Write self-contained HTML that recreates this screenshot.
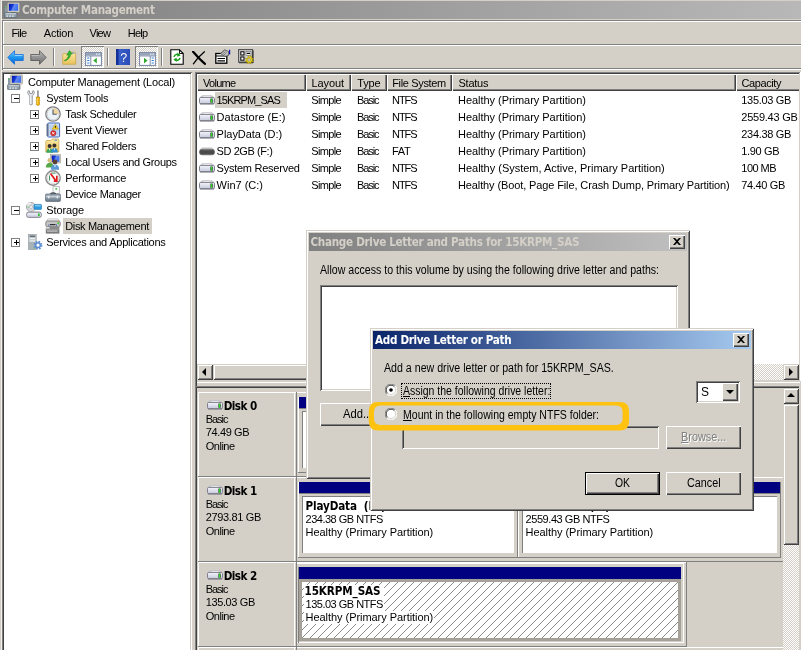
<!DOCTYPE html>
<html lang="en"><head><meta charset="utf-8"><title>Computer Management</title>
<style>
html,body{margin:0;padding:0}
body{width:801px;height:650px;overflow:hidden;background:#d4d0c8;position:relative;font-family:"Liberation Sans",sans-serif;font-size:11px;color:#000}
#r{position:absolute;left:0;top:0;width:801px;height:650px;overflow:hidden;will-change:transform}
#r div,#r span,#r svg{position:absolute;box-sizing:border-box}
.t{white-space:nowrap;line-height:13px;font-size:11px;letter-spacing:-0.2px}
.b{white-space:nowrap;line-height:13px;font-size:11.6px;font-weight:bold;font-family:"DejaVu Sans Condensed","DejaVu Sans","Liberation Sans",sans-serif;font-stretch:condensed}
.d{white-space:nowrap;line-height:13px;font-size:12px;transform-origin:0 0}
.dither{background-image:linear-gradient(45deg,#fff 25%,transparent 25%,transparent 75%,#fff 75%),linear-gradient(45deg,#fff 25%,transparent 25%,transparent 75%,#fff 75%);background-size:2px 2px;background-position:0 0,1px 1px;background-color:#d4d0c8}
u{text-decoration:underline}
</style></head>
<body><div id="r">
<svg style="left:0;top:0" width="0" height="0"><defs>
<linearGradient id="gb" x1="0" y1="0" x2="0" y2="1"><stop offset="0" stop-color="#7fd0ff"/><stop offset=".5" stop-color="#1e96f0"/><stop offset="1" stop-color="#0a5ad0"/></linearGradient>
<linearGradient id="gg" x1="0" y1="0" x2="0" y2="1"><stop offset="0" stop-color="#b8b8b8"/><stop offset="1" stop-color="#6c6c6c"/></linearGradient>
<linearGradient id="gd" x1="0" y1="0" x2="0" y2="1"><stop offset="0" stop-color="#f4f4fa"/><stop offset="1" stop-color="#c4c8dc"/></linearGradient>
<linearGradient id="gs" x1="0" y1="0" x2="1" y2=".35"><stop offset="0" stop-color="#0014a0"/><stop offset=".45" stop-color="#1838d8"/><stop offset=".6" stop-color="#6088f0"/><stop offset="1" stop-color="#4070f0"/></linearGradient>
<linearGradient id="gf" x1="0" y1="0" x2="0" y2="1"><stop offset="0" stop-color="#fbe9a6"/><stop offset="1" stop-color="#e8c25a"/></linearGradient>
<linearGradient id="gh" x1="0" y1="0" x2="1" y2="0"><stop offset="0" stop-color="#16329a"/><stop offset=".2" stop-color="#3a62cc"/><stop offset="1" stop-color="#2a4cb8"/></linearGradient>
<linearGradient id="gt" x1="0" y1="0" x2="0" y2="1"><stop offset="0" stop-color="#a8b4c0"/><stop offset="1" stop-color="#6c7c8c"/></linearGradient>
</defs></svg>
<div style="left:1px;top:0px;width:1px;height:650px;background:#f2f0ec"></div>
<div style="left:2px;top:1px;width:799px;height:18px;background:linear-gradient(90deg,#808080,#b8b8b8)"></div>
<span class="b" style="letter-spacing:-0.290px;left:22.00px;top:4px;color:#d4d0c8;">Computer Management</span>
<svg style="left:4px;top:2px" width="16" height="16" viewBox="0 0 16 16"><rect x="3.5" y=".8" width="12" height="9.4" rx=".8" fill="#d8d4c4" stroke="#9c9888" stroke-width=".6"/><rect x="4.8" y="1.8" width="9.4" height="7" fill="url(#gs)"/><rect x="7.5" y="10" width="4" height="1.6" fill="#555"/><rect x="1" y="4" width="2" height="6" fill="#8c9aa4"/><rect x="1.3" y="5" width="1" height="1" fill="#3c3"/><rect x=".6" y="10.6" width="12.4" height="5" rx=".6" fill="#8e9ca8" stroke="#5c6874" stroke-width=".7"/><rect x="1.6" y="11.3" width="10.4" height="1" fill="#d8e0e8"/><rect x="2.5" y="13.4" width="1.6" height="1.4" fill="#e8eef4"/><rect x="5.3" y="13.4" width="1.6" height="1.4" fill="#e8eef4"/><rect x="8.1" y="13.4" width="1.6" height="1.4" fill="#e8eef4"/></svg>
<div style="left:2px;top:20px;width:1px;height:50px;background:#808080"></div>
<div style="left:3px;top:21px;width:1px;height:49px;background:#fff"></div>
<div style="left:3px;top:20px;width:798px;height:1px;background:#808080"></div>
<div style="left:3px;top:21px;width:798px;height:1px;background:#fff"></div>
<span class="t" style="letter-spacing:-0.702px;left:11.50px;top:27px;">File</span>
<span class="t" style="letter-spacing:-0.191px;left:43.75px;top:27px;">Action</span>
<span class="t" style="letter-spacing:-0.733px;left:89.50px;top:27px;">View</span>
<span class="t" style="letter-spacing:-0.752px;left:127.75px;top:27px;">Help</span>
<div style="left:3px;top:44px;width:798px;height:1px;background:#808080"></div>
<div style="left:3px;top:45px;width:798px;height:1px;background:#fff"></div>
<div style="left:3px;top:68px;width:798px;height:1px;background:#808080"></div>
<div style="left:3px;top:69px;width:798px;height:1px;background:#fff"></div>
<div style="left:53px;top:48px;width:1px;height:18px;background:#808080"></div>
<div style="left:54px;top:48px;width:1px;height:18px;background:#fff"></div>
<div style="left:107px;top:48px;width:1px;height:18px;background:#808080"></div>
<div style="left:108px;top:48px;width:1px;height:18px;background:#fff"></div>
<div style="left:161px;top:48px;width:1px;height:18px;background:#808080"></div>
<div style="left:162px;top:48px;width:1px;height:18px;background:#fff"></div>
<div style="left:81px;top:46px;width:23px;height:22px;box-shadow:inset 1px 1px 0 #808080,inset -1px -1px 0 #fff"></div>
<div class="dither" style="left:82px;top:47px;width:21px;height:20px"></div>
<div style="left:135px;top:46px;width:23px;height:22px;box-shadow:inset 1px 1px 0 #808080,inset -1px -1px 0 #fff"></div>
<div class="dither" style="left:136px;top:47px;width:21px;height:20px"></div>
<svg style="left:7px;top:50px" width="17" height="15" viewBox="0 0 17 15"><path d="M.8 7.500L7.500.7v3.800h8.700v6H7.500v3.800z" fill="url(#gb)" stroke="#1874d8" stroke-width=".9" stroke-linejoin="round"/><path d="M7.800 5.400h7.600" stroke="#b8e4ff" stroke-width=".8"/></svg>
<svg style="left:30px;top:50px" width="17" height="15" viewBox="0 0 17 15"><path d="M16.200 7.500L9.500.7v3.800H.8v6h8.700v3.800z" fill="url(#gg)" stroke="#5c5c5c" stroke-width=".9" stroke-linejoin="round"/><path d="M1.500 5.400h7.800" stroke="#d0d0d0" stroke-width=".7"/></svg>
<svg style="left:62px;top:50px" width="15" height="15" viewBox="0 0 15 15"><path d="M.7 4.500c0-.5.300-.8.800-.8h4.300l1.300-1.500h5.800c.5 0 .8.300.8.800V14.300H.7z" fill="url(#gf)" stroke="#c8a040" stroke-width=".7"/><rect x="10" y="2.700" width="2.600" height=".9" fill="#4a90e0"/><path d="M2.300 10.500C5 9.500 6.200 7.500 6.600 4.800L4.700 5.200 7.500.6 10.300 4l-1.600.3C8.300 7.500 6 10 2.800 11z" fill="#30b830" stroke="#188018" stroke-width=".5"/></svg>
<svg style="left:85px;top:52px" width="17" height="14" viewBox="0 0 17 14"><rect x=".6" y=".6" width="15.800" height="12.800" fill="#fff" stroke="#7484a4" stroke-width="1"/><rect x="1" y="1" width="15" height="2.600" fill="#9aa4b8"/><rect x="11" y="1.500" width="1.500" height="1.300" fill="#e8ecf4"/><rect x="13.500" y="1.500" width="1.500" height="1.300" fill="#e8ecf4"/><path d="M1 4h15" stroke="#7484a4" stroke-width=".8"/><path d="M5.800 4v9.400" stroke="#7484a4" stroke-width=".9"/><path d="M2.200 6h2.200M2.200 8.500h2.200M2.200 11h2.200" stroke="#2c7cd8" stroke-width="1.200"/><path d="M11.800 5.800v5.600L8.300 8.600z" fill="#30a830"/></svg>
<svg style="left:116px;top:49px" width="14" height="16" viewBox="0 0 14 16"><rect x="0" y="0" width="14" height="16" fill="url(#gh)"/><rect x="0" y="0" width="2.600" height="16" fill="#16309a"/><text x="7.800" y="12.500" text-anchor="middle" font-family="Liberation Sans,sans-serif" font-size="12.500" fill="#fff" stroke="#1a2f8a" stroke-width=".35" paint-order="stroke">?</text></svg>
<svg style="left:139px;top:52px" width="17" height="14" viewBox="0 0 17 14"><rect x=".6" y=".6" width="15.800" height="12.800" fill="#fff" stroke="#7484a4" stroke-width="1"/><rect x="1" y="1" width="15" height="2.600" fill="#9aa4b8"/><rect x="11" y="1.500" width="1.500" height="1.300" fill="#e8ecf4"/><rect x="13.500" y="1.500" width="1.500" height="1.300" fill="#e8ecf4"/><path d="M1 4h15" stroke="#7484a4" stroke-width=".8"/><path d="M11.200 4v9.400" stroke="#7484a4" stroke-width=".9"/><path d="M12.600 6h2.200M12.600 8.500h2.200M12.600 11h2.200" stroke="#2c7cd8" stroke-width="1.200"/><path d="M5 5.800v5.600L8.500 8.600z" fill="#30a830"/></svg>
<svg style="left:170px;top:49px" width="14" height="16" viewBox="0 0 14 16"><path d="M.8.800h8.700l3.700 3.700v10.700H.8z" fill="#fff" stroke="#000" stroke-width="1.100"/><path d="M9.500.8v3.700h3.700" fill="none" stroke="#000" stroke-width=".9"/><path d="M9.500 6.800A3 3 0 0 0 4 7.800" fill="none" stroke="#18a018" stroke-width="1.500"/><path d="M7.300 3.600l3.300 2.600-3.300 1.600z" fill="#18a018"/><path d="M4.500 9.800A3 3 0 0 0 10 8.800" fill="none" stroke="#18a018" stroke-width="1.500"/><path d="M6.700 13l-3.300-2.600 3.300-1.600z" fill="#18a018"/></svg>
<svg style="left:192px;top:51px" width="14" height="14" viewBox="0 0 14 14"><path d="M1 .6C4 4 8 9 13 12.800" fill="none" stroke="#000" stroke-width="2.300" stroke-linecap="round"/><path d="M12.400.8C8 4.500 4 9 1.400 12.800" fill="none" stroke="#000" stroke-width="1.300" stroke-linecap="round"/></svg>
<svg style="left:215px;top:49px" width="16" height="15" viewBox="0 0 16 15"><rect x=".8" y="4.500" width="11" height="9.700" fill="#fff" stroke="#000" stroke-width="1.300"/><path d="M1 7h10.500M2.500 9.500h7.500M2.500 11.800h7.500" stroke="#000" stroke-width="1.200"/><path d="M5.500 4.500L9.500.8l4 1.600v4l-3.500 1z" fill="#c0c0c0" stroke="#404040" stroke-width=".7"/><path d="M6.500 4l3-2.600M7.800 5l3-2.600M9 6l2.600-2.400" stroke="#606060" stroke-width=".6"/><rect x="14" y=".8" width="1.200" height="4.700" fill="#1010c0"/></svg>
<svg style="left:238px;top:49px" width="17" height="16" viewBox="0 0 17 16"><rect x=".6" y=".6" width="14" height="12.500" fill="#d0d0d0" stroke="#505050" stroke-width="1.100"/><path d="M1 13.800h14M15 1.500v12.500" stroke="#303030" stroke-width="1.100"/><rect x="2.800" y="2.800" width="3.200" height="3.200" fill="#fff" stroke="#000" stroke-width="1"/><rect x="2.800" y="8" width="3.200" height="3.200" fill="#fff" stroke="#000" stroke-width="1"/><rect x="8" y="2.300" width="5" height="4.200" fill="#f4f4f4" stroke="#606060" stroke-width=".6"/><path d="M8.800 4.400h3.400" stroke="#000" stroke-width="1.200"/><path d="M10.500 6.300l1 2.200 2-1.700-.3 2.500 2.600.2-2 1.500 1.700 1.800-2.500-.1-.2 2.500-1.600-1.900-1.700 1.700-.2-2.400-2.400-.1 1.900-1.500-1.600-1.800 2.400.2z" fill="#f4dc10" stroke="#a08c00" stroke-width=".6"/><circle cx="11.200" cy="10.800" r="1.500" fill="#c8c4b8" stroke="#807c60" stroke-width=".4"/></svg>
<div style="left:2px;top:72px;width:190px;height:590px;background:#fff;box-shadow:inset 1px 1px 0 #808080,inset -1px -1px 0 #fff,inset 2px 2px 0 #404040,inset -2px -2px 0 #d4d0c8"></div>
<span class="t" style="letter-spacing:-0.199px;left:28.00px;top:76px;">Computer Management (Local)</span>
<svg style="left:7px;top:74px" width="16" height="16" viewBox="0 0 16 16"><rect x="3.5" y=".8" width="12" height="9.4" rx=".8" fill="#d8d4c4" stroke="#9c9888" stroke-width=".6"/><rect x="4.8" y="1.8" width="9.4" height="7" fill="url(#gs)"/><rect x="7.5" y="10" width="4" height="1.6" fill="#555"/><rect x="1" y="4" width="2" height="6" fill="#8c9aa4"/><rect x="1.3" y="5" width="1" height="1" fill="#3c3"/><rect x=".6" y="10.6" width="12.4" height="5" rx=".6" fill="#8e9ca8" stroke="#5c6874" stroke-width=".7"/><rect x="1.6" y="11.3" width="10.4" height="1" fill="#d8e0e8"/><rect x="2.5" y="13.4" width="1.6" height="1.4" fill="#e8eef4"/><rect x="5.3" y="13.4" width="1.6" height="1.4" fill="#e8eef4"/><rect x="8.1" y="13.4" width="1.6" height="1.4" fill="#e8eef4"/></svg>
<span class="t" style="letter-spacing:-0.264px;left:46.20px;top:92px;">System Tools</span>
<svg style="left:27px;top:90px" width="16" height="16" viewBox="0 0 16 16"><path d="M1.200 .8C.3 2.600.8 4.800 2.700 5.800L2.700 14.400Q4 15.600 5.300 14.400L5.300 5.800C7.200 4.800 7.700 2.600 6.800.8L5.400 1V3.500H2.600V1z" fill="#e4e6ea" stroke="#85898f" stroke-width=".8"/><path d="M3.300 6.500v7.500" stroke="#fff" stroke-width=".8"/><rect x="10.300" y=".4" width="1.300" height="7" fill="#70767c"/><path d="M9.300 7h3.300l-.3 2.200.5 1-.5 1 .3 3.300c0 1.100-3.300 1.100-3.300 0l.3-3.300-.5-1 .5-1z" fill="#f4b400" stroke="#a87800" stroke-width=".6"/><path d="M10.300 8v6" stroke="#ffe070" stroke-width=".8"/></svg>
<div style="left:11px;top:94px;width:9px;height:9px;border:1px solid #808080;background:#fff"><i style="position:absolute;left:2px;top:3px;width:5px;height:1px;background:#000"></i></div>
<span class="t" style="letter-spacing:-0.288px;left:65.20px;top:108px;">Task Scheduler</span>
<svg style="left:45px;top:106px" width="16" height="16" viewBox="0 0 16 16"><circle cx="8" cy="8" r="7.200" fill="#eef3fa" stroke="#7c7c7c" stroke-width="1.300"/><circle cx="8" cy="8" r="6" fill="none" stroke="#c4c8cc" stroke-width=".8"/><path d="M8 8V2.200A5.800 5.800 0 0 1 13.800 8z" fill="#f0d49a"/><path d="M8 3.500V8.300H11.800" fill="none" stroke="#4a5a74" stroke-width="1.100"/></svg>
<div style="left:30px;top:110px;width:9px;height:9px;border:1px solid #808080;background:#fff"><i style="position:absolute;left:2px;top:3px;width:5px;height:1px;background:#000"></i><i style="position:absolute;left:4px;top:1px;width:1px;height:5px;background:#000"></i></div>
<span class="t" style="letter-spacing:-0.222px;left:65.20px;top:124px;">Event Viewer</span>
<svg style="left:45px;top:122px" width="16" height="16" viewBox="0 0 16 16"><rect x="2.600" y="1" width="12" height="14" rx=".8" fill="#cfe0fa" stroke="#4468b8" stroke-width="1"/><path d="M4.500 4h9M4.500 6h9M4.500 8h9M4.500 10h9M4.500 12h9" stroke="#8fb0e8" stroke-width=".7"/><path d="M1 3h3M1 5h3M1 7h3M1 9h3M1 11h3M1 13h3" stroke="#606870" stroke-width=".9"/><path d="M10.300 2.200l3.200 5h-6.400z" fill="#f8d020" stroke="#b89000" stroke-width=".5"/><rect x="9.900" y="4" width=".9" height="1.800" fill="#000"/><circle cx="8.300" cy="11.200" r="2.600" fill="#e03030" stroke="#a01010" stroke-width=".5"/><path d="M7.200 10.100l2.200 2.200M9.400 10.100l-2.200 2.200" stroke="#fff" stroke-width=".9"/></svg>
<div style="left:30px;top:126px;width:9px;height:9px;border:1px solid #808080;background:#fff"><i style="position:absolute;left:2px;top:3px;width:5px;height:1px;background:#000"></i><i style="position:absolute;left:4px;top:1px;width:1px;height:5px;background:#000"></i></div>
<span class="t" style="letter-spacing:-0.300px;left:65.20px;top:140px;">Shared Folders</span>
<svg style="left:45px;top:138px" width="16" height="16" viewBox="0 0 16 16"><path d="M.8 3.500c0-.6.400-1 1-1h4l1.400-1.500h5.600c.6 0 1 .4 1 1V14H.8z" fill="url(#gf)" stroke="#c8a040" stroke-width=".7"/><rect x="9.500" y="1.700" width="2.500" height="1" fill="#4a90e0"/><circle cx="4.600" cy="8" r="2" fill="#3a3030"/><path d="M1.300 14.800c0-3 1.400-4.300 3.300-4.300s3.300 1.300 3.300 4.300z" fill="#38a860"/><circle cx="9.400" cy="7.600" r="2" fill="#3a3030"/><path d="M6.200 14.400c0-3 1.400-4.300 3.300-4.300s3.300 1.300 3.300 4.300z" fill="#3090d0"/><path d="M4.600 10.500l0 2M9.400 10.200v2" stroke="#fff" stroke-width=".8"/></svg>
<div style="left:30px;top:142px;width:9px;height:9px;border:1px solid #808080;background:#fff"><i style="position:absolute;left:2px;top:3px;width:5px;height:1px;background:#000"></i><i style="position:absolute;left:4px;top:1px;width:1px;height:5px;background:#000"></i></div>
<span class="t" style="letter-spacing:-0.325px;left:65.20px;top:156px;">Local Users and Groups</span>
<svg style="left:45px;top:154px" width="16" height="16" viewBox="0 0 16 16"><rect x="5.500" y=".6" width="10" height="8.400" fill="#d8d4c4" stroke="#a09c8c" stroke-width=".6"/><rect x="6.600" y="1.500" width="7.800" height="6.400" fill="url(#gs)"/><circle cx="4.800" cy="6.300" r="2.300" fill="#d8c080"/><path d="M.8 13.500c0-3.200 1.700-4.800 4-4.800s4 1.600 4 4.800z" fill="#58a848"/><circle cx="10" cy="8" r="2.400" fill="#5a4030"/><path d="M5.800 15.800c0-3.400 1.800-5.200 4.200-5.200s4.200 1.800 4.200 5.200z" fill="#5a98d8"/><path d="M10 10.600v2.500" stroke="#e8f0ff" stroke-width="1"/></svg>
<div style="left:30px;top:158px;width:9px;height:9px;border:1px solid #808080;background:#fff"><i style="position:absolute;left:2px;top:3px;width:5px;height:1px;background:#000"></i><i style="position:absolute;left:4px;top:1px;width:1px;height:5px;background:#000"></i></div>
<span class="t" style="letter-spacing:-0.185px;left:65.20px;top:172px;">Performance</span>
<svg style="left:45px;top:170px" width="16" height="16" viewBox="0 0 16 16"><circle cx="8" cy="8" r="7.200" fill="#fafafa" stroke="#8a8a8a" stroke-width="1.400"/><circle cx="8" cy="8" r="5.800" fill="none" stroke="#d0d0d0" stroke-width=".7"/><path d="M4.500 5.500v5" stroke="#2a8a4a" stroke-width=".9"/><path d="M5.500 3.500l5.500 7.500M11.800 5.800v5.400h-3" fill="none" stroke="#e01818" stroke-width="1.700"/><path d="M6.500 3.200h4" stroke="#2a8a4a" stroke-width=".8"/></svg>
<div style="left:30px;top:174px;width:9px;height:9px;border:1px solid #808080;background:#fff"><i style="position:absolute;left:2px;top:3px;width:5px;height:1px;background:#000"></i><i style="position:absolute;left:4px;top:1px;width:1px;height:5px;background:#000"></i></div>
<span class="t" style="letter-spacing:-0.318px;left:65.20px;top:188px;">Device Manager</span>
<svg style="left:45px;top:186px" width="16" height="16" viewBox="0 0 16 16"><rect x="8" y=".6" width="6.400" height="7" fill="#f8f8f8" stroke="#a0a0a0" stroke-width=".6"/><rect x="10.400" y="2" width="1.600" height="1.600" fill="#40c040"/><path d="M5.500 8.500c0-2 5-2 5 0" fill="none" stroke="#404850" stroke-width="1.300"/><rect x=".6" y="8" width="14.800" height="7.400" rx=".8" fill="url(#gt)" stroke="#55626e" stroke-width=".7"/><rect x=".9" y="10.300" width="14.200" height="1" fill="#dfe6ec"/><rect x="3" y="9.800" width="1.400" height="2.600" fill="#e8eef2"/><rect x="11.600" y="9.800" width="1.400" height="2.600" fill="#e8eef2"/></svg>
<span class="t" style="letter-spacing:-0.102px;left:46.20px;top:204px;">Storage</span>
<svg style="left:26px;top:202px" width="16" height="16" viewBox="0 0 16 16"><circle cx="5" cy="5" r="4.600" fill="#d4d8dc" stroke="#8c9094" stroke-width=".7"/><circle cx="5" cy="5" r="1.500" fill="#f8f8f8" stroke="#9a9a9a" stroke-width=".5"/><path d="M1.500 3.500A4 4 0 0 1 5 1" stroke="#fff" stroke-width="1.200" fill="none"/><rect x="1.600" y="4.600" width="1.200" height="1" fill="#50c850"/><rect x="8" y="2.400" width="7.600" height="5" rx="1" fill="#2c9ce0" stroke="#1a70b0" stroke-width=".6"/><rect x="9" y="3.200" width="5.600" height="1.200" fill="#8cd0f8"/><path d="M2 9.500h12l1.400 1.500H.6z" fill="#c8c8d0"/><rect x=".6" y="10.200" width="14.800" height="5.200" rx="2" fill="url(#gd)" stroke="#80808a" stroke-width=".9"/><rect x="12" y="11.400" width="1.700" height="2.800" fill="#30c030"/></svg>
<div style="left:11px;top:206px;width:9px;height:9px;border:1px solid #808080;background:#fff"><i style="position:absolute;left:2px;top:3px;width:5px;height:1px;background:#000"></i></div>
<div style="left:63px;top:218px;width:89px;height:16px;background:#d4d0c8"></div>
<span class="t" style="letter-spacing:-0.328px;left:65.20px;top:220px;">Disk Management</span>
<svg style="left:45px;top:218px" width="16" height="16" viewBox="0 0 16 16"><path d="M3 .8h10l1.500 2.500h-13z" fill="#f4f4f4" stroke="#a0a0a0" stroke-width=".5"/><rect x=".8" y="3" width="14.400" height="5.600" rx="1.500" fill="#c4c4c4" stroke="#707070" stroke-width=".8"/><rect x="12.400" y="4.200" width="1.600" height="2" fill="#40d040"/><rect x="12.400" y="3.600" width="1.600" height=".7" fill="#e8a020"/><rect x="5" y="6" width="5.500" height="1.200" fill="#303030"/><rect x="3.400" y="6.600" width="1" height="1" fill="#1030c0"/><rect x="11" y="6.600" width="1" height="1" fill="#1030c0"/><rect x=".8" y="8.800" width="13.600" height="3" fill="#8a8a8a"/><rect x="1" y="9.200" width="3.600" height="1.300" fill="#f0f0f0"/><rect x=".8" y="11.800" width="13.600" height="3.800" fill="#7a7a7a"/><rect x="2" y="12.600" width="10.500" height=".9" fill="#e8e8e8"/></svg>
<span class="t" style="letter-spacing:-0.236px;left:46.20px;top:236px;">Services and Applications</span>
<svg style="left:27px;top:234px" width="16" height="16" viewBox="0 0 16 16"><rect x="1.600" y=".6" width="7.600" height="14.800" fill="#c0c8cc" stroke="#8a9498" stroke-width=".6"/><rect x="2.600" y="1.600" width="5.600" height="1.200" fill="#505860"/><rect x="2.600" y="4.200" width="5.600" height="1" fill="#f0f4f6"/><rect x="2.600" y="6.400" width="5.600" height="1" fill="#f0f4f6"/><rect x="1.600" y="8" width="7.600" height="7.400" fill="#98a4a8" opacity=".6"/><rect x="6.800" y="13.400" width="1.400" height="1" fill="#50d050"/><circle cx="11" cy="11.200" r="3.300" fill="none" stroke="#5a8cd4" stroke-width="2.200" stroke-dasharray="1.500 1.100"/><circle cx="11" cy="11.200" r="2.300" fill="#f4f8ff" stroke="#5a8cd4" stroke-width="1.400"/><circle cx="11" cy="11.200" r="1" fill="#fff"/></svg>
<div style="left:11px;top:238px;width:9px;height:9px;border:1px solid #808080;background:#fff"><i style="position:absolute;left:2px;top:3px;width:5px;height:1px;background:#000"></i><i style="position:absolute;left:4px;top:1px;width:1px;height:5px;background:#000"></i></div>
<div style="left:195px;top:72px;width:1px;height:590px;background:#808080"></div>
<div style="left:196px;top:73px;width:1px;height:590px;background:#404040"></div>
<div style="left:195px;top:72px;width:606px;height:1px;background:#808080"></div>
<div style="left:196px;top:73px;width:605px;height:1px;background:#404040"></div>
<div style="left:197px;top:74px;width:602px;height:290px;background:#fff"></div>
<div style="left:197px;top:74px;width:109px;height:17px;background:#d4d0c8;box-shadow:inset 1px 1px 0 #fff,inset -1px -1px 0 #404040,inset -2px -2px 0 #808080;"></div>
<span class="t" style="letter-spacing:-0.714px;left:203.00px;top:77px;">Volume</span>
<div style="left:306px;top:74px;width:45px;height:17px;background:#d4d0c8;box-shadow:inset 1px 1px 0 #fff,inset -1px -1px 0 #404040,inset -2px -2px 0 #808080;"></div>
<span class="t" style="letter-spacing:-0.094px;left:311.50px;top:77px;">Layout</span>
<div style="left:351px;top:74px;width:36px;height:17px;background:#d4d0c8;box-shadow:inset 1px 1px 0 #fff,inset -1px -1px 0 #404040,inset -2px -2px 0 #808080;"></div>
<span class="t" style="letter-spacing:-0.160px;left:357.25px;top:77px;">Type</span>
<div style="left:387px;top:74px;width:65px;height:17px;background:#d4d0c8;box-shadow:inset 1px 1px 0 #fff,inset -1px -1px 0 #404040,inset -2px -2px 0 #808080;"></div>
<span class="t" style="letter-spacing:-0.354px;left:392.25px;top:77px;">File System</span>
<div style="left:452px;top:74px;width:284px;height:17px;background:#d4d0c8;box-shadow:inset 1px 1px 0 #fff,inset -1px -1px 0 #404040,inset -2px -2px 0 #808080;"></div>
<span class="t" style="letter-spacing:-0.237px;left:458.50px;top:77px;">Status</span>
<div style="left:736px;top:74px;width:80px;height:17px;background:#d4d0c8;box-shadow:inset 1px 1px 0 #fff,inset -1px -1px 0 #404040,inset -2px -2px 0 #808080;"></div>
<span class="t" style="letter-spacing:-0.414px;left:741.60px;top:77px;">Capacity</span>
<div style="left:215px;top:92px;width:72px;height:16px;background:#d4d0c8"></div>
<svg style="left:199px;top:95px" width="16" height="10" viewBox="0 0 16 10"><path d="M3.4 .4h9.200l2.400 2.200H1z" fill="#cfcfd4" stroke="#b4b4ba" stroke-width=".5"/><rect x="4.500" y="1.100" width="7" height=".9" fill="#f4f4f6"/><rect x=".5" y="2.400" width="15" height="6.400" rx="1.300" fill="url(#gd)" stroke="#80808c" stroke-width="1"/><path d="M1 8.900h14" stroke="#6c6c78" stroke-width=".9"/><rect x="11.200" y="3.400" width="2.800" height="4.400" rx=".6" fill="#5a5a68"/><rect x="11.800" y="3.600" width="1.500" height="4.200" fill="#30d820"/></svg>
<span class="t" style="letter-spacing:-0.879px;left:216.60px;top:94px;">15KRPM_SAS</span>
<span class="t" style="letter-spacing:-0.641px;left:311.20px;top:94px;">Simple</span>
<span class="t" style="letter-spacing:-1.100px;left:357.00px;top:94px;">Basic</span>
<span class="t" style="letter-spacing:-1.044px;left:392.00px;top:94px;">NTFS</span>
<span class="t" style="letter-spacing:-0.041px;left:458.00px;top:94px;">Healthy (Primary Partition)</span>
<span class="t" style="letter-spacing:-0.320px;left:741.30px;top:94px;">135.03 GB</span>
<svg style="left:199px;top:112px" width="16" height="10" viewBox="0 0 16 10"><path d="M3.4 .4h9.200l2.400 2.200H1z" fill="#cfcfd4" stroke="#b4b4ba" stroke-width=".5"/><rect x="4.500" y="1.100" width="7" height=".9" fill="#f4f4f6"/><rect x=".5" y="2.400" width="15" height="6.400" rx="1.300" fill="url(#gd)" stroke="#80808c" stroke-width="1"/><path d="M1 8.900h14" stroke="#6c6c78" stroke-width=".9"/><rect x="11.200" y="3.400" width="2.800" height="4.400" rx=".6" fill="#5a5a68"/><rect x="11.800" y="3.600" width="1.500" height="4.200" fill="#30d820"/></svg>
<span class="t" style="letter-spacing:0.027px;left:216.60px;top:111px;">Datastore (E:)</span>
<span class="t" style="letter-spacing:-0.641px;left:311.20px;top:111px;">Simple</span>
<span class="t" style="letter-spacing:-1.100px;left:357.00px;top:111px;">Basic</span>
<span class="t" style="letter-spacing:-1.044px;left:392.00px;top:111px;">NTFS</span>
<span class="t" style="letter-spacing:-0.041px;left:458.00px;top:111px;">Healthy (Primary Partition)</span>
<span class="t" style="letter-spacing:-0.242px;left:741.30px;top:111px;">2559.43 GB</span>
<svg style="left:199px;top:129px" width="16" height="10" viewBox="0 0 16 10"><path d="M3.4 .4h9.200l2.400 2.200H1z" fill="#cfcfd4" stroke="#b4b4ba" stroke-width=".5"/><rect x="4.500" y="1.100" width="7" height=".9" fill="#f4f4f6"/><rect x=".5" y="2.400" width="15" height="6.400" rx="1.300" fill="url(#gd)" stroke="#80808c" stroke-width="1"/><path d="M1 8.900h14" stroke="#6c6c78" stroke-width=".9"/><rect x="11.200" y="3.400" width="2.800" height="4.400" rx=".6" fill="#5a5a68"/><rect x="11.800" y="3.600" width="1.500" height="4.200" fill="#30d820"/></svg>
<span class="t" style="letter-spacing:-0.038px;left:216.60px;top:128px;">PlayData (D:)</span>
<span class="t" style="letter-spacing:-0.641px;left:311.20px;top:128px;">Simple</span>
<span class="t" style="letter-spacing:-1.100px;left:357.00px;top:128px;">Basic</span>
<span class="t" style="letter-spacing:-1.044px;left:392.00px;top:128px;">NTFS</span>
<span class="t" style="letter-spacing:-0.041px;left:458.00px;top:128px;">Healthy (Primary Partition)</span>
<span class="t" style="letter-spacing:-0.320px;left:741.30px;top:128px;">234.38 GB</span>
<svg style="left:199px;top:146px" width="16" height="10" viewBox="0 0 16 10"><path d="M3 1.2h10l2 2.5H1z" fill="#d8d8d8"/><rect x=".5" y="3.2" width="15" height="5.6" rx="2.6" fill="#4a4a4a" stroke="#6a6a6a" stroke-width=".8"/><path d="M2.5 3.8h11" stroke="#888" stroke-width=".8"/></svg>
<span class="t" style="letter-spacing:-0.419px;left:216.60px;top:145px;">SD 2GB (F:)</span>
<span class="t" style="letter-spacing:-0.641px;left:311.20px;top:145px;">Simple</span>
<span class="t" style="letter-spacing:-1.100px;left:357.00px;top:145px;">Basic</span>
<span class="t" style="letter-spacing:-0.316px;left:392.00px;top:145px;">FAT</span>
<span class="t" style="letter-spacing:-0.041px;left:458.00px;top:145px;">Healthy (Primary Partition)</span>
<span class="t" style="letter-spacing:-0.337px;left:741.30px;top:145px;">1.90 GB</span>
<svg style="left:199px;top:163px" width="16" height="10" viewBox="0 0 16 10"><path d="M3.4 .4h9.200l2.400 2.200H1z" fill="#cfcfd4" stroke="#b4b4ba" stroke-width=".5"/><rect x="4.500" y="1.100" width="7" height=".9" fill="#f4f4f6"/><rect x=".5" y="2.400" width="15" height="6.400" rx="1.300" fill="url(#gd)" stroke="#80808c" stroke-width="1"/><path d="M1 8.900h14" stroke="#6c6c78" stroke-width=".9"/><rect x="11.200" y="3.400" width="2.800" height="4.400" rx=".6" fill="#5a5a68"/><rect x="11.800" y="3.600" width="1.500" height="4.200" fill="#30d820"/></svg>
<span class="t" style="letter-spacing:-0.253px;left:216.60px;top:162px;">System Reserved</span>
<span class="t" style="letter-spacing:-0.641px;left:311.20px;top:162px;">Simple</span>
<span class="t" style="letter-spacing:-1.100px;left:357.00px;top:162px;">Basic</span>
<span class="t" style="letter-spacing:-1.044px;left:392.00px;top:162px;">NTFS</span>
<span class="t" style="letter-spacing:-0.011px;left:458.00px;top:162px;">Healthy (System, Active, Primary Partition)</span>
<span class="t" style="letter-spacing:-0.534px;left:741.30px;top:162px;">100 MB</span>
<svg style="left:199px;top:180px" width="16" height="10" viewBox="0 0 16 10"><path d="M3.4 .4h9.200l2.400 2.200H1z" fill="#cfcfd4" stroke="#b4b4ba" stroke-width=".5"/><rect x="4.500" y="1.100" width="7" height=".9" fill="#f4f4f6"/><rect x=".5" y="2.400" width="15" height="6.400" rx="1.300" fill="url(#gd)" stroke="#80808c" stroke-width="1"/><path d="M1 8.900h14" stroke="#6c6c78" stroke-width=".9"/><rect x="11.200" y="3.400" width="2.800" height="4.400" rx=".6" fill="#5a5a68"/><rect x="11.800" y="3.600" width="1.500" height="4.200" fill="#30d820"/></svg>
<span class="t" style="letter-spacing:-0.016px;left:216.60px;top:179px;">Win7 (C:)</span>
<span class="t" style="letter-spacing:-0.641px;left:311.20px;top:179px;">Simple</span>
<span class="t" style="letter-spacing:-1.100px;left:357.00px;top:179px;">Basic</span>
<span class="t" style="letter-spacing:-1.044px;left:392.00px;top:179px;">NTFS</span>
<span class="t" style="letter-spacing:-0.116px;left:458.00px;top:179px;">Healthy (Boot, Page File, Crash Dump, Primary Partition)</span>
<span class="t" style="letter-spacing:-0.348px;left:741.30px;top:179px;">74.40 GB</span>
<div style="left:799px;top:73px;width:1px;height:308px;background:#d4d0c8"></div>
<div style="left:800px;top:72px;width:1px;height:310px;background:#fff"></div>
<div style="left:197px;top:364px;width:602px;height:16px;background:#d4d0c8"></div>
<div class="dither" style="left:745px;top:364px;width:38px;height:16px"></div>
<div style="left:197px;top:364px;width:16px;height:16px;background:#d4d0c8;box-shadow:inset 1px 1px 0 #d4d0c8,inset -1px -1px 0 #404040,inset 2px 2px 0 #fff,inset -2px -2px 0 #808080;"><i style="position:absolute;left:5px;top:4px;border:4px solid transparent;border-right:4px solid #000;border-left:0;width:0;height:0"></i></div>
<div style="left:213px;top:364px;width:540px;height:16px;background:#d4d0c8;box-shadow:inset 1px 1px 0 #d4d0c8,inset -1px -1px 0 #404040,inset 2px 2px 0 #fff,inset -2px -2px 0 #808080;"></div>
<div style="left:783px;top:364px;width:16px;height:16px;background:#d4d0c8;box-shadow:inset 1px 1px 0 #d4d0c8,inset -1px -1px 0 #404040,inset 2px 2px 0 #fff,inset -2px -2px 0 #808080;"><i style="position:absolute;left:6px;top:4px;border:4px solid transparent;border-left:4px solid #000;border-right:0;width:0;height:0"></i></div>
<div style="left:197px;top:380px;width:602px;height:1px;background:#d4d0c8"></div>
<div style="left:197px;top:381px;width:604px;height:1px;background:#d4d0c8"></div>
<div style="left:197px;top:382px;width:603px;height:1px;background:#fff"></div>
<div style="left:195px;top:386px;width:604px;height:1px;background:#808080"></div>
<div style="left:196px;top:387px;width:603px;height:1px;background:#404040"></div>
<div style="left:198px;top:392px;width:502px;height:1px;background:#fff"></div>
<div style="left:198px;top:392px;width:1px;height:84px;background:#fff"></div>
<div style="left:198px;top:476px;width:503px;height:1px;background:#808080"></div>
<div style="left:700px;top:392px;width:1px;height:85px;background:#808080"></div>
<div style="left:294px;top:392px;width:1px;height:84px;background:#fff"></div>
<div style="left:296px;top:392px;width:1px;height:85px;background:#808080"></div>
<span class="b" style="letter-spacing:-0.541px;left:223.70px;top:400px;">Disk 0</span>
<svg style="left:207px;top:400px" width="16" height="10" viewBox="0 0 16 10"><path d="M3.4 .4h9.200l2.400 2.200H1z" fill="#cfcfd4" stroke="#b4b4ba" stroke-width=".5"/><rect x="4.500" y="1.100" width="7" height=".9" fill="#f4f4f6"/><rect x=".5" y="2.400" width="15" height="6.400" rx="1.300" fill="url(#gd)" stroke="#80808c" stroke-width="1"/><path d="M1 8.900h14" stroke="#6c6c78" stroke-width=".9"/><rect x="11.200" y="3.400" width="2.800" height="4.400" rx=".6" fill="#5a5a68"/><rect x="11.800" y="3.600" width="1.500" height="4.200" fill="#30d820"/></svg>
<span class="t" style="letter-spacing:-1.025px;left:205.70px;top:413px;">Basic</span>
<span class="t" style="letter-spacing:-0.363px;left:205.70px;top:426px;">74.49 GB</span>
<span class="t" style="letter-spacing:-0.476px;left:205.70px;top:440px;">Online</span>
<div style="left:198px;top:477px;width:592px;height:1px;background:#fff"></div>
<div style="left:198px;top:477px;width:1px;height:84px;background:#fff"></div>
<div style="left:198px;top:561px;width:593px;height:1px;background:#808080"></div>
<div style="left:790px;top:477px;width:1px;height:85px;background:#808080"></div>
<div style="left:294px;top:477px;width:1px;height:84px;background:#fff"></div>
<div style="left:296px;top:477px;width:1px;height:85px;background:#808080"></div>
<span class="b" style="letter-spacing:-0.541px;left:223.70px;top:485px;">Disk 1</span>
<svg style="left:207px;top:485px" width="16" height="10" viewBox="0 0 16 10"><path d="M3.4 .4h9.200l2.400 2.200H1z" fill="#cfcfd4" stroke="#b4b4ba" stroke-width=".5"/><rect x="4.500" y="1.100" width="7" height=".9" fill="#f4f4f6"/><rect x=".5" y="2.400" width="15" height="6.400" rx="1.300" fill="url(#gd)" stroke="#80808c" stroke-width="1"/><path d="M1 8.900h14" stroke="#6c6c78" stroke-width=".9"/><rect x="11.200" y="3.400" width="2.800" height="4.400" rx=".6" fill="#5a5a68"/><rect x="11.800" y="3.600" width="1.500" height="4.200" fill="#30d820"/></svg>
<span class="t" style="letter-spacing:-1.025px;left:205.70px;top:498px;">Basic</span>
<span class="t" style="letter-spacing:-0.342px;left:205.70px;top:511px;">2793.81 GB</span>
<span class="t" style="letter-spacing:-0.476px;left:205.70px;top:525px;">Online</span>
<div style="left:198px;top:562px;width:488px;height:1px;background:#fff"></div>
<div style="left:198px;top:562px;width:1px;height:84px;background:#fff"></div>
<div style="left:198px;top:646px;width:489px;height:1px;background:#808080"></div>
<div style="left:686px;top:562px;width:1px;height:85px;background:#808080"></div>
<div style="left:294px;top:562px;width:1px;height:84px;background:#fff"></div>
<div style="left:296px;top:562px;width:1px;height:85px;background:#808080"></div>
<span class="b" style="letter-spacing:-0.541px;left:223.70px;top:570px;">Disk 2</span>
<svg style="left:207px;top:570px" width="16" height="10" viewBox="0 0 16 10"><path d="M3.4 .4h9.200l2.400 2.200H1z" fill="#cfcfd4" stroke="#b4b4ba" stroke-width=".5"/><rect x="4.500" y="1.100" width="7" height=".9" fill="#f4f4f6"/><rect x=".5" y="2.400" width="15" height="6.400" rx="1.300" fill="url(#gd)" stroke="#80808c" stroke-width="1"/><path d="M1 8.900h14" stroke="#6c6c78" stroke-width=".9"/><rect x="11.200" y="3.400" width="2.800" height="4.400" rx=".6" fill="#5a5a68"/><rect x="11.800" y="3.600" width="1.500" height="4.200" fill="#30d820"/></svg>
<span class="t" style="letter-spacing:-1.025px;left:205.70px;top:583px;">Basic</span>
<span class="t" style="letter-spacing:-0.370px;left:205.70px;top:596px;">135.03 GB</span>
<span class="t" style="letter-spacing:-0.476px;left:205.70px;top:610px;">Online</span>
<div style="left:198px;top:647px;width:585px;height:1px;background:#fff"></div>
<div style="left:198px;top:647px;width:1px;height:3px;background:#fff"></div>
<div style="left:294px;top:647px;width:1px;height:3px;background:#fff"></div>
<div style="left:296px;top:647px;width:1px;height:3px;background:#808080"></div>
<div style="left:298px;top:397px;width:1px;height:76px;background:#fff"></div>
<div style="left:680px;top:397px;width:1px;height:76px;background:#808080"></div>
<div style="left:298px;top:472px;width:383px;height:1px;background:#808080"></div>
<div style="left:299px;top:397px;width:381px;height:11px;background:#000080"></div>
<div style="left:299px;top:408px;width:381px;height:1px;background:#808080"></div>
<div style="left:302px;top:411px;width:375px;height:57px;background:#fff;border-left:1px solid #808080;border-top:1px solid #808080"></div>
<div style="left:298px;top:482px;width:1px;height:76px;background:#fff"></div>
<div style="left:517px;top:482px;width:1px;height:76px;background:#808080"></div>
<div style="left:298px;top:557px;width:220px;height:1px;background:#808080"></div>
<div style="left:299px;top:482px;width:218px;height:11px;background:#000080"></div>
<div style="left:299px;top:493px;width:218px;height:1px;background:#808080"></div>
<div style="left:302px;top:496px;width:212px;height:57px;background:#fff;border-left:1px solid #808080;border-top:1px solid #808080"></div>
<span class="b" style="left:305.6px;top:500px;letter-spacing:-0.15px;">PlayData&nbsp; (D:)</span>
<span class="t" style="letter-spacing:-0.510px;left:305.60px;top:513px;">234.38 GB NTFS</span>
<span class="t" style="letter-spacing:-0.051px;left:305.60px;top:526px;">Healthy (Primary Partition)</span>
<div style="left:518px;top:482px;width:1px;height:76px;background:#fff"></div>
<div style="left:780px;top:482px;width:1px;height:76px;background:#808080"></div>
<div style="left:518px;top:557px;width:263px;height:1px;background:#808080"></div>
<div style="left:519px;top:482px;width:261px;height:11px;background:#000080"></div>
<div style="left:519px;top:493px;width:261px;height:1px;background:#808080"></div>
<div style="left:522px;top:496px;width:255px;height:57px;background:#fff;border-left:1px solid #808080;border-top:1px solid #808080"></div>
<span class="b" style="left:525.6px;top:500px;letter-spacing:-0.15px;">Datastore&nbsp; (E:)</span>
<span class="t" style="letter-spacing:-0.446px;left:525.60px;top:513px;">2559.43 GB NTFS</span>
<span class="t" style="letter-spacing:-0.054px;left:525.60px;top:526px;">Healthy (Primary Partition)</span>
<div style="left:297px;top:563px;width:387px;height:80px;border:1px solid #fff;border-left:0"></div>
<div style="left:298px;top:567px;width:1px;height:76px;background:#808080"></div>
<div style="left:299px;top:567px;width:382px;height:12px;background:#000080"></div>
<div style="left:299px;top:579px;width:382px;height:62px;background:repeating-linear-gradient(135deg,#fff 0,#fff 5.1px,#8a8a8a 5.1px,#8a8a8a 5.657px);border:3px solid #a5a198"></div>
<div style="left:304px;top:585px;width:80px;height:13px;background:#fff"></div>
<div style="left:304px;top:598px;width:80px;height:13px;background:#fff"></div>
<div style="left:304px;top:611px;width:130px;height:13px;background:#fff"></div>
<span class="b" style="letter-spacing:-0.117px;left:304.60px;top:585px;">15KRPM_SAS</span>
<span class="t" style="letter-spacing:-0.510px;left:305.60px;top:598px;">135.03 GB NTFS</span>
<span class="t" style="letter-spacing:-0.051px;left:305.60px;top:611px;">Healthy (Primary Partition)</span>
<div class="dither" style="left:783px;top:388px;width:16px;height:262px"></div>
<div style="left:783px;top:388px;width:16px;height:16px;background:#d4d0c8;box-shadow:inset 1px 1px 0 #d4d0c8,inset -1px -1px 0 #404040,inset 2px 2px 0 #fff,inset -2px -2px 0 #808080;"><i style="position:absolute;left:4px;top:5px;border:4px solid transparent;border-bottom:4px solid #000;border-top:0;width:0;height:0"></i></div>
<div style="left:783px;top:404px;width:16px;height:141px;background:#d4d0c8;box-shadow:inset 1px 1px 0 #d4d0c8,inset -1px -1px 0 #404040,inset 2px 2px 0 #fff,inset -2px -2px 0 #808080;"></div>
<div style="left:306px;top:230px;width:384px;height:249px;background:#d4d0c8;box-shadow:inset 1px 1px 0 #d4d0c8,inset -1px -1px 0 #404040,inset 2px 2px 0 #fff,inset -2px -2px 0 #808080"></div>
<div style="left:309px;top:233px;width:378px;height:18px;background:linear-gradient(90deg,#808080,#c0c0c0)"></div>
<span class="b" style="letter-spacing:-0.297px;left:310.50px;top:236px;color:#d4d0c8">Change Drive Letter and Paths for 15KRPM_SAS</span>
<div style="left:669px;top:235px;width:16px;height:14px;background:#d4d0c8;box-shadow:inset 1px 1px 0 #fff,inset -1px -1px 0 #404040,inset -2px -2px 0 #808080;"><svg style="left:4px;top:3px" width="8" height="7" viewBox="0 0 8 7"><path d="M0 0h2l2 2 2-2h2L5 3.5 8 7H6L4 5 2 7H0l3-3.5z" fill="#000"/></svg></div>
<span class="d" style="transform:scaleX(0.8840);left:319.75px;top:264px;">Allow access to this volume by using the following drive letter and paths:</span>
<div style="left:320px;top:285px;width:358px;height:106px;background:#fff;box-shadow:inset 1px 1px 0 #808080,inset -1px -1px 0 #fff,inset 2px 2px 0 #404040,inset -2px -2px 0 #d4d0c8"></div>
<div style="left:320px;top:403px;width:75px;height:23px;background:#d4d0c8;box-shadow:inset 1px 1px 0 #fff,inset -1px -1px 0 #404040,inset -2px -2px 0 #808080;"></div>
<span class="d" style="transform:scaleX(0.9349);left:343.00px;top:408px;">Add...</span>
<div style="left:370px;top:328px;width:384px;height:183px;background:#d4d0c8;box-shadow:inset 1px 1px 0 #d4d0c8,inset -1px -1px 0 #404040,inset 2px 2px 0 #fff,inset -2px -2px 0 #808080"></div>
<div style="left:373px;top:331px;width:378px;height:18px;background:linear-gradient(90deg,#0a246a,#a6caf0)"></div>
<span class="b" style="letter-spacing:-0.309px;left:375.00px;top:334px;color:#fff">Add Drive Letter or Path</span>
<div style="left:733px;top:333px;width:16px;height:14px;background:#d4d0c8;box-shadow:inset 1px 1px 0 #fff,inset -1px -1px 0 #404040,inset -2px -2px 0 #808080;"><svg style="left:4px;top:3px" width="8" height="7" viewBox="0 0 8 7"><path d="M0 0h2l2 2 2-2h2L5 3.5 8 7H6L4 5 2 7H0l3-3.5z" fill="#000"/></svg></div>
<span class="d" style="transform:scaleX(0.8857);left:384.25px;top:362px;">Add a new drive letter or path for 15KRPM_SAS.</span>
<svg style="left:385px;top:384px" width="12" height="12" viewBox="0 0 12 12"><circle cx="6" cy="6" r="5.5" fill="#fff"/><path d="M1.8 10.2A5.9 5.9 0 0 1 10.2 1.8" fill="none" stroke="#808080" stroke-width="1"/><path d="M2.6 9.4A4.8 4.8 0 0 1 9.4 2.6" fill="none" stroke="#404040" stroke-width="1"/><path d="M10.2 1.8A5.9 5.9 0 0 1 1.8 10.2" fill="none" stroke="#fff" stroke-width="1"/><path d="M9.4 2.6A4.8 4.8 0 0 1 2.6 9.4" fill="none" stroke="#d4d0c8" stroke-width="1"/><circle cx="6" cy="6" r="1.8" fill="#000"/></svg>
<span class="d" style="transform:scaleX(0.8728);left:403.00px;top:385px;"><u>A</u>ssign the following drive letter:</span>
<div style="left:401px;top:383px;width:150px;height:16px;border:1px dotted #000"></div>
<svg style="left:385px;top:408px" width="12" height="12" viewBox="0 0 12 12"><circle cx="6" cy="6" r="5.5" fill="#fff"/><path d="M1.8 10.2A5.9 5.9 0 0 1 10.2 1.8" fill="none" stroke="#808080" stroke-width="1"/><path d="M2.6 9.4A4.8 4.8 0 0 1 9.4 2.6" fill="none" stroke="#404040" stroke-width="1"/><path d="M10.2 1.8A5.9 5.9 0 0 1 1.8 10.2" fill="none" stroke="#fff" stroke-width="1"/><path d="M9.4 2.6A4.8 4.8 0 0 1 2.6 9.4" fill="none" stroke="#d4d0c8" stroke-width="1"/></svg>
<span class="d" style="transform:scaleX(0.8774);left:403.00px;top:409px;"><u>M</u>ount in the following empty NTFS folder:</span>
<div style="left:696px;top:381px;width:44px;height:22px;background:#fff;box-shadow:inset 1px 1px 0 #808080,inset -1px -1px 0 #fff,inset 2px 2px 0 #404040,inset -2px -2px 0 #d4d0c8"></div>
<span class="d" style="left:701px;top:386px;">S</span>
<div style="left:722px;top:383px;width:16px;height:18px;background:#d4d0c8;box-shadow:inset 1px 1px 0 #fff,inset -1px -1px 0 #404040,inset -2px -2px 0 #808080;"><i style="position:absolute;left:4px;top:7px;border:4px solid transparent;border-top:4px solid #000;border-bottom:0;width:0;height:0"></i></div>
<div style="left:402px;top:426px;width:257px;height:23px;background:#d4d0c8;box-shadow:inset 1px 1px 0 #808080,inset -1px -1px 0 #fff,inset 2px 2px 0 #404040,inset -2px -2px 0 #d4d0c8"></div>
<div style="left:666px;top:426px;width:75px;height:23px;background:#d4d0c8;box-shadow:inset 1px 1px 0 #fff,inset -1px -1px 0 #404040,inset -2px -2px 0 #808080;"></div>
<span class="d" style="transform:scaleX(0.9058);left:681.00px;top:431px;color:#808080;text-shadow:1px 1px 0 #fff"><u>B</u>rowse...</span>
<div style="left:585px;top:472px;width:75px;height:23px;background:#000"></div>
<div style="left:586px;top:473px;width:73px;height:21px;background:#d4d0c8;box-shadow:inset 1px 1px 0 #fff,inset -1px -1px 0 #404040,inset -2px -2px 0 #808080;"></div>
<span class="d" style="transform:scaleX(0.8654);left:615.00px;top:477px;">OK</span>
<div style="left:666px;top:472px;width:75px;height:23px;background:#d4d0c8;box-shadow:inset 1px 1px 0 #fff,inset -1px -1px 0 #404040,inset -2px -2px 0 #808080;"></div>
<span class="d" style="transform:scaleX(0.8995);left:687.00px;top:477px;">Cancel</span>
<svg style="left:360px;top:395px" width="280" height="45" viewBox="360 395 280 45"><path fill-rule="evenodd" fill="#ffc20e" d="M377.8 402H620.0Q629.0 402 629.0 411V421.4Q629.0 430.4 620.0 430.4H377.8Q368.8 430.4 368.8 421.4V411Q368.8 402 377.8 402ZM380.5 405.4H616.1Q622.6 405.4 622.6 411.9V418.5Q622.6 425.0 616.1 425.0H380.5Q374 425.0 374 418.5V411.9Q374 405.4 380.5 405.4Z"/></svg>
</div></body></html>
